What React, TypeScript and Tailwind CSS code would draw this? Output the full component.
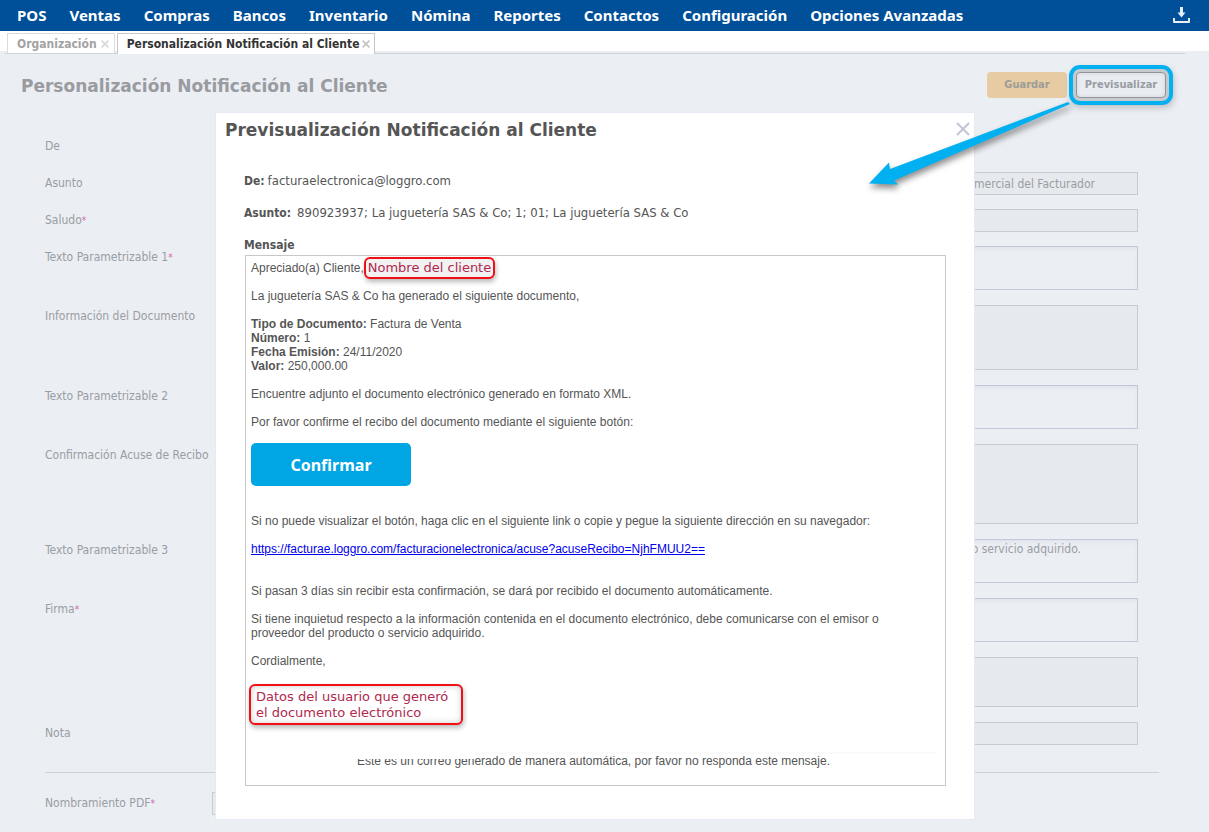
import { FormEvent, useState } from 'react';

const menu = ['POS', 'Ventas', 'Compras', 'Bancos', 'Inventario', 'Nómina', 'Reportes', 'Contactos', 'Configuración', 'Opciones Avanzadas'];

const readOnly = 'resize-none overflow-hidden border border-[#c9cbd0] bg-[#e6e9ed]';
const editable = 'resize-none overflow-hidden border border-[#c3c8d8] bg-[#ebeef3] shadow-[inset_0_3px_4px_-1px_#dfe3e9]';

const rows = [
  { id: 'texto1', label: 'Texto Parametrizable 1', required: true, box: 'h-[44px]', edit: true, align: '', value: '' },
  { id: 'info', label: 'Información del Documento', required: false, box: 'h-[65px]', edit: false, align: '', value: '' },
  { id: 'texto2', label: 'Texto Parametrizable 2', required: false, box: 'h-[44px]', edit: true, align: '', value: '' },
  { id: 'acuse', label: 'Confirmación Acuse de Recibo', required: false, box: 'h-[80px]', edit: false, align: '', value: '' },
  { id: 'texto3', label: 'Texto Parametrizable 3', required: false, box: 'h-[44px]', edit: true, align: 'pr-14 text-right', value: 'o servicio adquirido.' },
  { id: 'firma', label: 'Firma', required: true, box: 'h-[44px]', edit: true, align: '', value: '' },
  { id: 'firmaInfo', label: '', required: false, box: 'h-[50px]', edit: false, align: '', value: '' },
];

function Label({ id, text, required }: { id: string; text: string; required?: boolean }) {
  return (
    <label htmlFor={id} className="w-[167px] shrink-0 pt-[3px] leading-4 whitespace-nowrap">
      {text}{required && <span className="text-[10px] text-[#cf6fae]">*</span>}
    </label>
  );
}

function Cross({ className }: { className: string }) {
  return (
    <svg viewBox="0 0 14 14" className={className} fill="none" stroke="currentColor">
      <path d="M1 1 L13 13 M13 1 L1 13" />
    </svg>
  );
}

function TopMenu() {
  return (
    <nav className="flex h-[31px] items-center bg-[#004f99] pr-[19px] pb-px pl-[17px] font-['Noto_Sans',Tahoma,sans-serif] text-[15px] font-bold text-white">
      <div className="flex flex-1 gap-[23px]">
        {menu.map((m) => <a key={m} href="#" className="whitespace-nowrap">{m}</a>)}
      </div>
      <button aria-label="Descargar">
        <svg viewBox="0 0 17 17" className="h-[17px] w-[17px]" fill="none" stroke="#e6eef6" strokeWidth="2">
          <path d="M1 11 V15 H16 V11" strokeLinejoin="round" />
          <path d="M8.500 0 V6" strokeWidth="3" />
          <path d="M4.500 5.500 H12.500 L8.500 10.500 Z" fill="#e6eef6" stroke="none" />
        </svg>
      </button>
    </nav>
  );
}

function Tabs() {
  return (
    <div className="mr-6 ml-[5px] flex h-[23px] items-end border-b border-[#d0d4da] pl-[2px] text-[12px] font-bold">
      <div className="mr-[2px] flex h-[20px] items-center gap-1 border border-b-0 border-[#dcdcdc] bg-white pr-[5px] pl-[9px] text-[#a3a3a3]">
        <span>Organización</span>
        <button aria-label="Cerrar Organización"><Cross className="h-2 w-2 stroke-3 text-[#d8d8d8]" /></button>
      </div>
      <div className="-mb-px flex h-[21px] items-center gap-[3px] border border-b-0 border-[#c8c8c8] bg-white pr-1 pl-[9px] text-[#333333]">
        <span>Personalización Notificación al Cliente</span>
        <button aria-label="Cerrar pestaña"><Cross className="h-2 w-2 stroke-3 text-[#c4c4c4]" /></button>
      </div>
    </div>
  );
}

function Mail() {
  return (
    <div className="mt-[2px] ml-px h-[531px] border border-[#c8c8c8] px-[5px] pt-[5px] font-['Liberation_Sans',Arial,sans-serif] text-[12px] leading-[14px] text-[#555555]">
      <p className="mb-[14px] flex">
        <span>Apreciado(a) Cliente,</span>
        <mark className="-my-1 flex h-[22px] items-center rounded-md border-2 border-[#f00f14] bg-[#f2f2f2] px-[2px] font-['DejaVu_Sans',Verdana,sans-serif] text-[13px] text-[#b0284e] shadow-[1px_3px_5px_#bbbbbb]">Nombre del cliente</mark>
      </p>
      <p className="mb-[14px]">La juguetería SAS &amp; Co ha generado el siguiente documento,</p>
      <p><b>Tipo de Documento:</b> Factura de Venta</p>
      <p><b>Número:</b> 1</p>
      <p><b>Fecha Emisión:</b> 24/11/2020</p>
      <p className="mb-[14px]"><b>Valor:</b> 250,000.00</p>
      <p className="mb-[14px]">Encuentre adjunto el documento electrónico generado en formato XML.</p>
      <p className="mb-[14px]">Por favor confirme el recibo del documento mediante el siguiente botón:</p>
      <button className="mb-[28px] block h-[43px] w-[160px] rounded-[5px] bg-[#00a5e3] font-['Noto_Sans',sans-serif] text-[16px] font-bold text-white">Confirmar</button>
      <p className="mb-[14px]">Si no puede visualizar el botón, haga clic en el siguiente link o copie y pegue la siguiente dirección en su navegador:</p>
      <p className="mb-[28px]"><a href="#" className="text-[#0000ee] underline">https://facturae.loggro.com/facturacionelectronica/acuse?acuseRecibo=NjhFMUU2==</a></p>
      <p className="mb-[14px]">Si pasan 3 días sin recibir esta confirmación, se dará por recibido el documento automáticamente.</p>
      <p className="mb-[14px] max-w-[640px]">Si tiene inquietud respecto a la información contenida en el documento electrónico, debe comunicarse con el emisor o proveedor del producto o servicio adquirido.</p>
      <p className="mb-4">Cordialmente,</p>
      <mark className="-ml-[2px] block h-[41px] w-[214px] rounded-md border-2 border-[#f00f14] bg-white pt-[3px] pl-[5px] font-['DejaVu_Sans',Verdana,sans-serif] text-[13px] leading-4 whitespace-nowrap text-[#b0284e] shadow-[1px_3px_5px_#bbbbbb,inset_0_0_6px_#cccccc]">
        Datos del usuario que generó<br />el documento electrónico
      </mark>
      <div className="relative mt-[27px] mr-1">
        <div className="ml-[224px] border-t-2 border-[#fafafa]" />
        <p className="text-center">Este es un correo generado de manera automática, por favor no responda este mensaje.</p>
        {/* covers the top of the first words of the footer */}
        <div className="absolute top-0 left-0 h-[7px] w-[224px] bg-white" />
      </div>
    </div>
  );
}

function Preview({ onClose }: { onClose: () => void }) {
  return (
    <section role="dialog" aria-label="Previsualización" className="absolute top-[113px] right-[235px] left-[216px] bg-white pt-[7px] pr-7 pb-[33px] pl-7 text-[12px] text-[#555555] outline outline-[#e5eaf3]">
      <div className="-mr-[25px] -ml-[19px] flex items-start justify-between pr-px">
        <h2 className="font-['DejaVu_Sans',Verdana,sans-serif] text-[17px] leading-5 font-bold">Previsualización Notificación al Cliente</h2>
        <button aria-label="Cerrar" onClick={onClose} className="pt-[2px]"><Cross className="h-[14px] w-[14px] stroke-2 text-[#c0c6d6]" /></button>
      </div>
      <p className="mt-[33px] flex h-4 items-center gap-[3px]"><b>De:</b><span className="text-[13px]">facturaelectronica@loggro.com</span></p>
      <p className="mt-4 flex h-4 items-center gap-[6px]"><b>Asunto:</b><span className="text-[13px]">890923937; La juguetería SAS &amp; Co; 1; 01; La juguetería SAS &amp; Co</span></p>
      <p className="mt-4 leading-4 font-bold">Mensaje</p>
      <Mail />
    </section>
  );
}

export default function App() {
  const [open, setOpen] = useState(true);
  const onSubmit = (e: FormEvent) => e.preventDefault();

  return (
    <div className="relative min-h-screen bg-[linear-gradient(#ffffff_51px,#ebeef3_51px)] font-['DejaVu_Sans_Condensed','DejaVu_Sans',Tahoma,sans-serif] text-[12px] text-[#9a9da3]">
      <TopMenu />
      <Tabs />
      <form onSubmit={onSubmit}>
        <header className="flex items-start justify-between pt-[18px] pr-[43px] pb-[18px] pl-[21px]">
          <h1 className="pt-px font-['DejaVu_Sans',Verdana,sans-serif] text-[17px] leading-[26px] font-bold text-[#999ba1]">Personalización Notificación al Cliente</h1>
          <div className="flex items-center gap-[9px] text-[11px] font-bold">
            <button type="submit" className="h-[26px] w-[80px] rounded bg-[#e6cba3] text-[#9c9c98]">Guardar</button>
            <button type="button" onClick={() => setOpen(true)} className="h-[26px] w-[90px] rounded border border-[#92959b] bg-[#e9ecf1] text-[#999ca2] shadow-[inset_0_0_4px_#d2d5da,0_0_0_4px_#c6c9ce,1px_3px_6px_7px_#bcc0c6] outline-4 outline-offset-3 outline-[#00b0f0]">Previsualizar</button>
          </div>
        </header>
        <div className="pt-[18px] pr-[71px] pl-[45px]">
          <p className="pt-[3px] pb-[18px] leading-4">De</p>
          <div className="flex gap-2 pb-[14px]">
            <Label id="asunto" text="Asunto" />
            <input id="asunto" readOnly defaultValue="Comercial del Facturador" className={`h-[23px] flex-1 pr-[42px] text-right ${readOnly}`} />
          </div>
          <div className="flex gap-2 pb-[14px]">
            <Label id="saludo" text="Saludo" required />
            <input id="saludo" readOnly className={`h-[23px] flex-1 ${readOnly}`} />
          </div>
          {rows.map((r) => (
            <div key={r.id} className="flex gap-2 pb-[15px]">
              <Label id={r.id} text={r.label} required={r.required} />
              <textarea id={r.id} readOnly={!r.edit} defaultValue={r.value} className={`flex-1 ${r.box} ${r.align} ${r.edit ? editable : readOnly}`} />
            </div>
          ))}
          <div className="flex gap-2 pb-[27px]">
            <Label id="nota" text="Nota" />
            <input id="nota" readOnly className={`h-[23px] flex-1 ${readOnly}`} />
          </div>
          <hr className="-mr-[21px] border-[#cdd0d4]" />
          <div className="flex pt-[19px]">
            <Label id="pdf" text="Nombramiento PDF" required />
            <input id="pdf" className={`h-[23px] w-[300px] ${readOnly}`} />
          </div>
        </div>
      </form>
      {open && <Preview onClose={() => setOpen(false)} />}
      <svg viewBox="0 0 230 110" className="pointer-events-none absolute top-[90px] right-[119px] h-[110px] w-[230px] drop-shadow-[1px_4px_3px_rgba(0,0,0,0.45)]">
        <path d="M208 12 L210 14 L34 90.500 L38 94.500 L9 93.500 L29 72.500 L30 79 Z" fill="#00b0f0" />
      </svg>
    </div>
  );
}
